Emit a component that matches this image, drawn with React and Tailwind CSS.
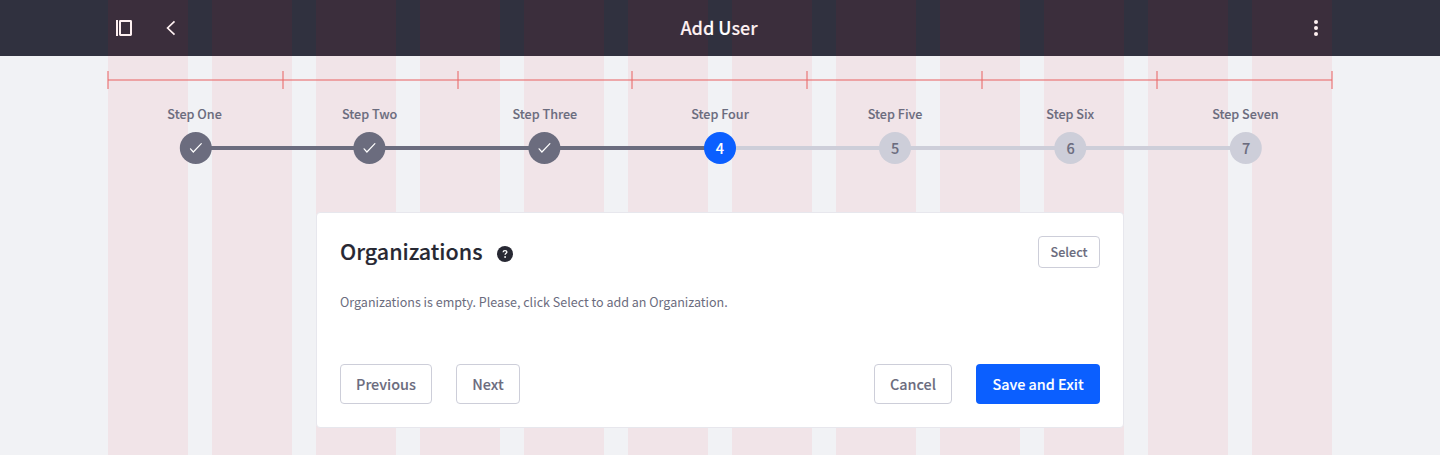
import React from "react";

const steps = [
  { label: "Step One", nudge: "translate-x-[0.8px]" },
  { label: "Step Two", nudge: "-translate-x-[0.6px]" },
  { label: "Step Three", nudge: "-translate-x-[0.6px]" },
  { label: "Step Four", nudge: "" },
  { label: "Step Five", nudge: "" },
  { label: "Step Six", nudge: "translate-x-[0.3px]" },
  { label: "Step Seven", nudge: "translate-x-[0.8px]" },
];
const CURRENT = 3;

function GridOverlay() {
  return (
    <div className="pointer-events-none absolute inset-y-0 left-[108px] grid w-[1224px] grid-cols-12 gap-6">
      {Array.from({ length: 12 }, (_, i) => (
        <div key={i} className="bg-[#e60014]/6" />
      ))}
    </div>
  );
}

function Header() {
  return (
    <header className="flex h-14 items-center bg-[#30313f] px-[108px] text-white">
      <div className="flex flex-1 items-center gap-[27px] pl-1">
        <svg width="24" height="24" viewBox="0 0 24 24" fill="none" stroke="currentColor" strokeWidth="2">
          <path d="M5 4v16" />
          <rect x="8" y="5" width="11" height="14" rx=".4" />
        </svg>
        <svg width="16" height="16" viewBox="0 0 16 16" fill="none" stroke="currentColor" strokeWidth="1.7">
          <path d="M11.500 1.300 4.600 8l6.900 6.700" />
        </svg>
      </div>
      <h1 className="-mt-0.5 pl-0.5 text-[18px] leading-6 font-medium [-webkit-text-stroke:0.1px]">Add User</h1>
      <div className="flex flex-1 justify-end pr-2">
        <svg width="16" height="16" viewBox="0 0 16 16" fill="currentColor">
          <circle cx="8" cy="2" r="2" />
          <circle cx="8" cy="8" r="2" />
          <circle cx="8" cy="14" r="2" />
        </svg>
      </div>
    </header>
  );
}

function Ruler() {
  return (
    <svg className="mx-auto mt-[15px] block" width="1226" height="18" viewBox="0 0 1226 18" fill="none" stroke="#e96c6c" strokeOpacity=".55" strokeWidth="2">
      <path d="M1 9h1224" />
      {[1, 176, 351, 525, 700, 875, 1050, 1225].map((x) => (
        <path key={x} d={`M${x} 0v18`} />
      ))}
    </svg>
  );
}

function Stepper() {
  return (
    <ol className="mx-auto mt-[15px] grid w-[1226px] grid-cols-7">
      {steps.map(({ label, nudge }, i) => {
        const done = i < CURRENT;
        const tone = done ? "bg-[#6b6c7e] text-white" : i === CURRENT ? "bg-[#0b5fff] text-white" : "bg-[#cdced9] text-[#6b6c7e]";
        return (
          <li key={label} className="flex flex-col items-center">
            <span className="h-7 text-[12.600px] leading-[19px] font-medium text-[#6b6c7e] [-webkit-text-stroke:0.1px]">{label}</span>
            <div className="flex w-full items-center">
              <div className={`-mr-0.5 h-1 flex-1 ${i === 0 ? "" : i <= CURRENT ? "bg-[#6b6c7e]" : "bg-[#cdced9]"}`} />
              <div className={`relative z-10 flex size-8 shrink-0 items-center justify-center rounded-full text-[14.500px] leading-none font-medium [-webkit-text-stroke:0.1px] ${tone} ${nudge}`}>
                {done ? (
                  <svg width="16" height="16" viewBox="0 0 16 16" fill="none" stroke="currentColor" strokeWidth="1.200">
                    <path d="m2.700 8.800 2.800 3.200 8-8.300" strokeLinecap="round" />
                  </svg>
                ) : (
                  i + 1
                )}
              </div>
              <div className={`-ml-0.5 h-1 flex-1 ${i === 6 ? "" : done ? "bg-[#6b6c7e]" : "bg-[#cdced9]"}`} />
            </div>
          </li>
        );
      })}
    </ol>
  );
}

function OrganizationsCard() {
  const button = "flex h-10 items-center justify-center rounded text-[14.400px] font-medium [-webkit-text-stroke:0.1px]";
  const secondary = "border border-[#cdced9] text-[#6b6c7e]";
  return (
    <section className="relative mx-auto mt-12 h-[216px] w-[808px] rounded border border-[#e7e7ed] bg-white px-[23px] pt-[23px]">
      <div className="flex h-8 items-center justify-between">
        <div className="flex items-center gap-[15px]">
          <h2 className="-mt-0.5 text-[21.500px] leading-8 font-medium text-[#272833] [-webkit-text-stroke:0.15px]">Organizations</h2>
          <svg className="mt-[3px]" width="16" height="16" viewBox="0 0 16 16">
            <circle cx="8" cy="8" r="8" fill="#272833" />
            <path d="M6.100 6.200c.1-1.100.9-1.600 1.900-1.600 1.100 0 1.900.6 1.900 1.500 0 1.200-1.800 1.300-1.800 2.700" fill="none" stroke="#fff" strokeWidth="1.300" />
            <circle cx="8.100" cy="11" r=".9" fill="#fff" />
          </svg>
        </div>
        <button className="flex h-8 w-[62px] items-center justify-center rounded border border-[#cdced9] text-[12.600px] font-medium text-[#6b6c7e] [-webkit-text-stroke:0.1px]">Select</button>
      </div>
      <p className="mt-6 text-[12.540px] leading-5 text-[#6b6c7e]">Organizations is empty. Please, click Select to add an Organization.</p>
      <div className="mt-[52px] flex gap-6">
        <button className={`${button} ${secondary} w-[92px]`}>Previous</button>
        <button className={`${button} ${secondary} w-16`}>Next</button>
        <button className={`${button} ${secondary} ml-auto w-[78px]`}>Cancel</button>
        <button className={`${button} w-[124px] bg-[#0b5fff] text-white`}>Save and Exit</button>
      </div>
    </section>
  );
}

export default function App() {
  return (
    <div className="relative h-[455px] w-[1440px] overflow-hidden bg-[#f1f2f5] font-['Noto_Sans_CJK_SC',sans-serif]">
      <Header />
      <GridOverlay />
      <div className="relative">
        <Ruler />
        <Stepper />
        <OrganizationsCard />
      </div>
    </div>
  );
}
